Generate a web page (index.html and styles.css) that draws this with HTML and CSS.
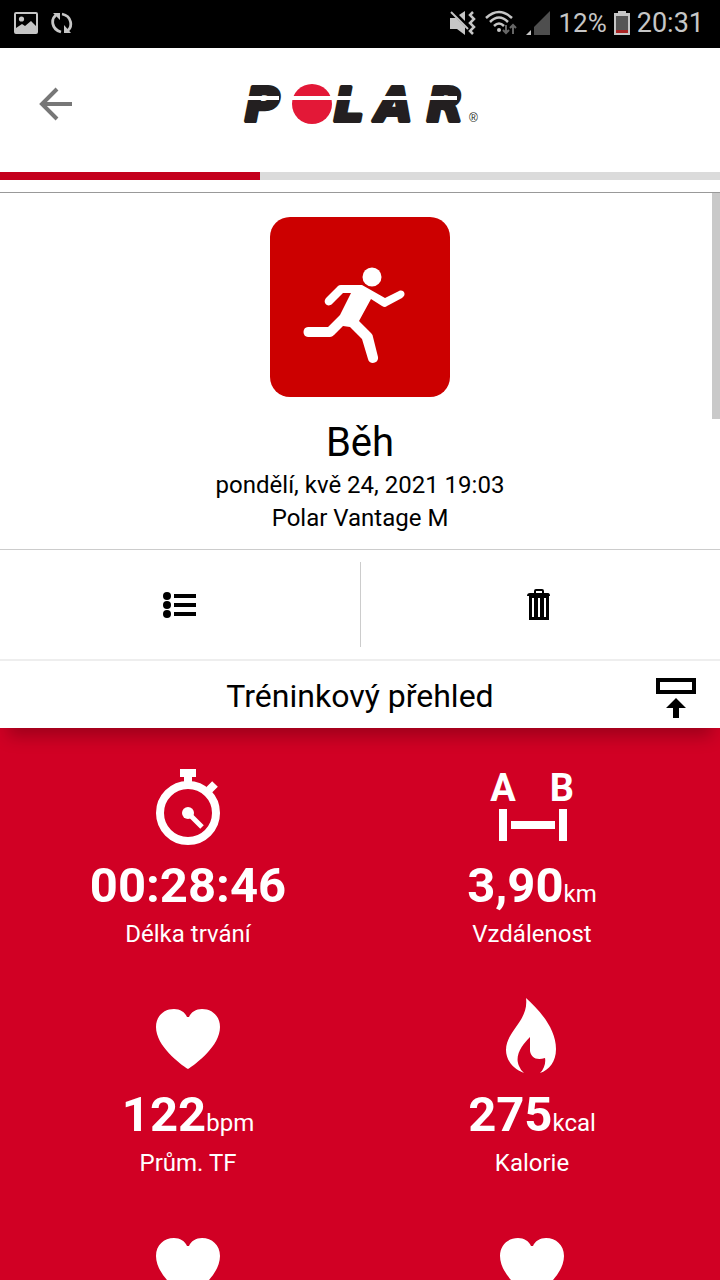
FILE: index.html
```html
<!DOCTYPE html>
<html lang="cs">
<head>
<meta charset="utf-8">
<meta name="viewport" content="width=device-width, initial-scale=1">
<title>Polar – Běh</title>
<link rel="stylesheet" href="styles.css">
</head>
<body>
<svg class="symbols" aria-hidden="true">
  <symbol id="heart" viewBox="0 0 64 76">
    <path fill="#fff" d="M32 71C24 66 0 48 0 29C0 18 8 11 18 11C24 11 29 14 31 19H33C35 14 40 11 46 11C56 11 64 18 64 29C64 48 40 66 32 71Z"/>
  </symbol>
</svg>
<div class="app">
  <div class="status">
    <div class="status-group status-left">
      <svg width="24" height="24" viewBox="0 0 24 24"><rect x="1" y="2" width="22" height="20" rx="1" fill="none" stroke="#c6c6c6" stroke-width="2"/><circle cx="7.500" cy="8" r="2.600" fill="#c6c6c6"/><path fill="#c6c6c6" d="M2 17L8 13L11 15L17 10L22 15V21H2Z"/></svg>
      <svg width="22" height="24" viewBox="0 0 22 24"><g fill="none" stroke="#c6c6c6" stroke-width="2.800"><path d="M5 4C0 8 0 18 10 21"/><path d="M11 3C21 5 22 16 16 20"/></g><path fill="#c6c6c6" d="M2 2H9V9ZM13 14V22H20Z"/></svg>
    </div>
    <div class="status-group">
      <svg width="28" height="26" viewBox="0 0 28 26"><path fill="#c6c6c6" d="M1 8H7L16 17V25L8 19H1ZM10 5L16 1V11Z"/><path fill="none" stroke="#c6c6c6" stroke-width="2" d="M2 2L19 19"/><path fill="none" stroke="#c6c6c6" stroke-width="2.500" d="M24 2L21 5L25 9L21 13L25 17L21 21L24 24"/></svg>
      <svg width="34" height="26" viewBox="0 0 34 26"><g fill="none" stroke="#c6c6c6" stroke-width="2.500"><path d="M2 8Q15-4 28 8"/><path d="M6 12Q15 3 24 12"/><path d="M10 16Q15 11 20 16"/></g><circle cx="15" cy="20" r="2" fill="#c6c6c6"/><path fill="none" stroke="#666" stroke-width="2" d="M22 15V23M19 20L22 23L25 20M29 24V15M26 18L29 15L32 18"/></svg>
      <svg width="26" height="26" viewBox="0 0 26 26"><path fill="#c6c6c6" d="M1 25H6V20Z"/><path fill="#4e4e4e" d="M9 25V17L25 1V25Z"/></svg>
      <span class="status-text percent">12%</span>
      <svg width="16" height="24" viewBox="0 0 16 24"><path fill="#c6c6c6" d="M4 0H12V2H16V24H0V2H4Z"/><path fill="#555" d="M2 5H14V19H2Z"/><path fill="#a92424" d="M2 19H14V22H2Z"/></svg>
      <span class="status-text">20:31</span>
    </div>
  </div>

  <header class="header">
    <button class="back" aria-label="Zpět"><svg width="36" height="36" viewBox="0 0 36 36"><path fill="none" stroke="#777" stroke-width="4" d="M34 18H6M19 3L4 18L19 33"/></svg></button>
    <svg class="logo" width="240" height="72" viewBox="0 -16 240 72" role="img" aria-label="Polar">
      <text class="wordmark" x="5 94 136 187" y="37">PLAR</text>
      <circle cx="72" cy="20" r="20" fill="#e31837"/>
      <path fill="#fff" d="M0 12H39V16H0ZM50 12H175V16H50ZM177 12H217V16H177Z"/>
      <text class="registered" x="229" y="38">®</text>
    </svg>
  </header>
  <div class="progress"><div class="progress-fill"></div></div>

  <main class="content">
    <div class="scroll-thumb"></div>
    <section class="summary">
      <svg width="180" height="180" viewBox="0 0 180 180" role="img" aria-label="Běh">
        <rect width="180" height="180" rx="20" fill="#c00"/>
        <circle cx="102" cy="60" r="9.500" fill="#fff"/>
        <path fill="#fff" d="M71 68H92L115 81L129 74C134 72 137 78 132 81L117 89Q115 91 112 89L101 82L89 104L101 116Q103 118 103 120L108 140C109 147 99 148 98 142L92 122L80 110L73 109L64 118Q62 120 60 120H38C32 120 32 110 38 110H58L70 98L81 76H73L62 87C58 91 52 86 56 81L68 69Q69 68 71 68Z"/>
      </svg>
      <h1>Běh</h1>
      <p>pondělí, kvě 24, 2021 19:03</p>
      <p>Polar Vantage M</p>
    </section>
    <div class="actions">
      <button aria-label="Podrobnosti"><svg width="34" height="28" viewBox="0 0 34 28"><circle cx="4" cy="5" r="4"/><circle cx="4" cy="14" r="4"/><circle cx="4" cy="23" r="4"/><path d="M11 3H33V7H11ZM11 12H33V16H11ZM11 21H33V25H11Z"/></svg></button>
      <button aria-label="Smazat"><svg width="24" height="32" viewBox="0 0 24 32"><path fill-rule="evenodd" d="M7 4V2Q7 0 9 0H15Q17 0 17 2V4H21Q23 4 23 7H22V31H2V7H0Q0 4 3 4ZM9 4H15V2H9ZM5 9V28H7V9ZM11 9V28H13V9ZM17 9V28H19V9Z"/></svg></button>
    </div>
    <div class="overview">
      <h2>Tréninkový přehled</h2>
      <button class="collapse" aria-label="Sbalit"><svg width="40" height="40" viewBox="0 0 40 40"><path fill="none" stroke="#000" stroke-width="4" d="M2 2H38V14H2Z"/><path d="M20 20L30 30H23V40H17V30H10Z"/></svg></button>
    </div>
    <section class="stats">
      <div class="stat">
        <svg width="64" height="76" viewBox="0 0 64 76"><g fill="none" stroke="#fff"><circle cx="32" cy="44" r="28" stroke-width="8"/><path stroke-width="8" d="M32 4V16M53 21L59 15"/><path stroke-width="5" d="M32 44L46 58"/></g><path fill="#fff" d="M24 0H40V8H24Z"/><circle cx="32" cy="44" r="6" fill="#fff"/></svg>
        <div class="value">00:28:46</div>
        <div class="label">Délka trvání</div>
      </div>
      <div class="stat">
        <svg class="distance" width="88" height="76" viewBox="-4 0 88 76"><text class="point" x="11" y="32">A</text><text class="point" x="70" y="32">B</text><path fill="#fff" d="M7 40H15V72H7ZM67 40H75V72H67ZM19 52H63V60H19Z"/></svg>
        <div class="value">3,90<span>km</span></div>
        <div class="label">Vzdálenost</div>
      </div>
      <div class="stat">
        <svg width="64" height="76"><use href="#heart"/></svg>
        <div class="value">122<span>bpm</span></div>
        <div class="label">Prům. TF</div>
      </div>
      <div class="stat">
        <svg width="54" height="76" viewBox="0 0 54 76"><path fill="#fff" d="M21 0C32 10 51 29 51 51C51 64 44 72 35 75C39 71 41 65 40 60C31 63 26 59 25 53V39C18 46 9 57 14 68Q16 73 19 75C8 71 1 62 1 52C1 33 24 23 21 0Z"/></svg>
        <div class="value">275<span>kcal</span></div>
        <div class="label">Kalorie</div>
      </div>
      <div class="stat"><svg width="64" height="76"><use href="#heart"/></svg></div>
      <div class="stat"><svg width="64" height="76"><use href="#heart"/></svg></div>
    </section>
  </main>
</div>
</body>
</html>
```
FILE: styles.css
```css
* { box-sizing: border-box; }
body {
  margin: 0;
  background: #fff;
  color: #000;
  font-family: Roboto, "Liberation Sans", sans-serif;
}
h1, h2, p { margin: 0; font-weight: 400; }
button { display: flex; align-items: center; justify-content: center; padding: 0; border: 0; background: none; cursor: pointer; }
svg { display: block; flex: none; }
.symbols { position: absolute; width: 0; height: 0; }
.app { display: flex; flex-direction: column; height: 100vh; }

.status {
  display: flex;
  flex: none;
  align-items: center;
  justify-content: space-between;
  height: 48px;
  padding: 0 16px 2px 14px;
  background: #000;
}
.status-group { display: flex; align-items: center; gap: 7px; }
.status-left { gap: 13px; }
.status-text { color: #c6c6c6; font-size: 27px; line-height: 32px; }
.percent { font-size: 26px; }

.header {
  display: grid;
  flex: none;
  grid-template-columns: 1fr auto 1fr;
  align-items: center;
  height: 124px;
  padding: 0 38px 12px;
}
.back { width: 36px; height: 36px; }
.wordmark {
  fill: #231f20;
  stroke: #231f20;
  stroke-width: 4px;
  stroke-linejoin: round;
  font: italic 700 47px "DejaVu Sans", sans-serif;
}
.registered { fill: #231f20; font: 12px "Liberation Sans", sans-serif; }
.progress { flex: none; height: 8px; margin-bottom: 12px; background: #dbdbdb; }
.progress-fill { width: 36.1%; height: 100%; background: #c4001d; }

.content {
  position: relative;
  flex: 1;
  min-height: 0;
  overflow-y: auto;
  scrollbar-width: none;
  border-top: 1px solid #999;
}
.scroll-thumb { position: absolute; top: 0; right: 0; width: 8px; height: 226px; background: #c9c9c9; }
.summary {
  display: flex;
  flex-direction: column;
  align-items: center;
  padding: 24px 16px 14px;
  border-bottom: 1px solid #ccc;
}
h1 { margin-top: 20px; font-size: 40px; line-height: 52px; }
.summary p { font-size: 24px; line-height: 33px; }

.actions { display: grid; grid-template-columns: 1fr 1fr; padding: 12px 0; border-bottom: 2px solid #eee; }
.actions button { height: 85px; }
.actions button + button { padding-right: 4px; border-left: 1px solid #ccc; }

.overview {
  position: relative;
  display: grid;
  grid-template-columns: 40px 1fr 40px;
  align-items: center;
  height: 67px;
  padding: 2px 24px 0;
  box-shadow: 0 16px 16px -8px rgba(0, 0, 0, 0.25);
}
.overview h2 { grid-column: 2; font-size: 32px; line-height: 40px; text-align: center; }
.collapse { margin-top: 4px; }

.stats {
  display: grid;
  grid-template-columns: 1fr 1fr;
  row-gap: 48px;
  padding: 41px 16px 48px;
  background: #d10024;
  color: #fff;
}
.stat { display: flex; flex-direction: column; align-items: center; }
.value { height: 56px; margin-top: 13px; font-size: 49px; font-weight: 700; line-height: 56px; white-space: nowrap; }
.value span { font-size: 24px; font-weight: 400; line-height: 24px; }
.label { margin-top: 4px; font-size: 24px; line-height: 32px; }
.distance { overflow: visible; }
.point { fill: #fff; font: 700 38px Roboto, sans-serif; text-anchor: middle; }
```
